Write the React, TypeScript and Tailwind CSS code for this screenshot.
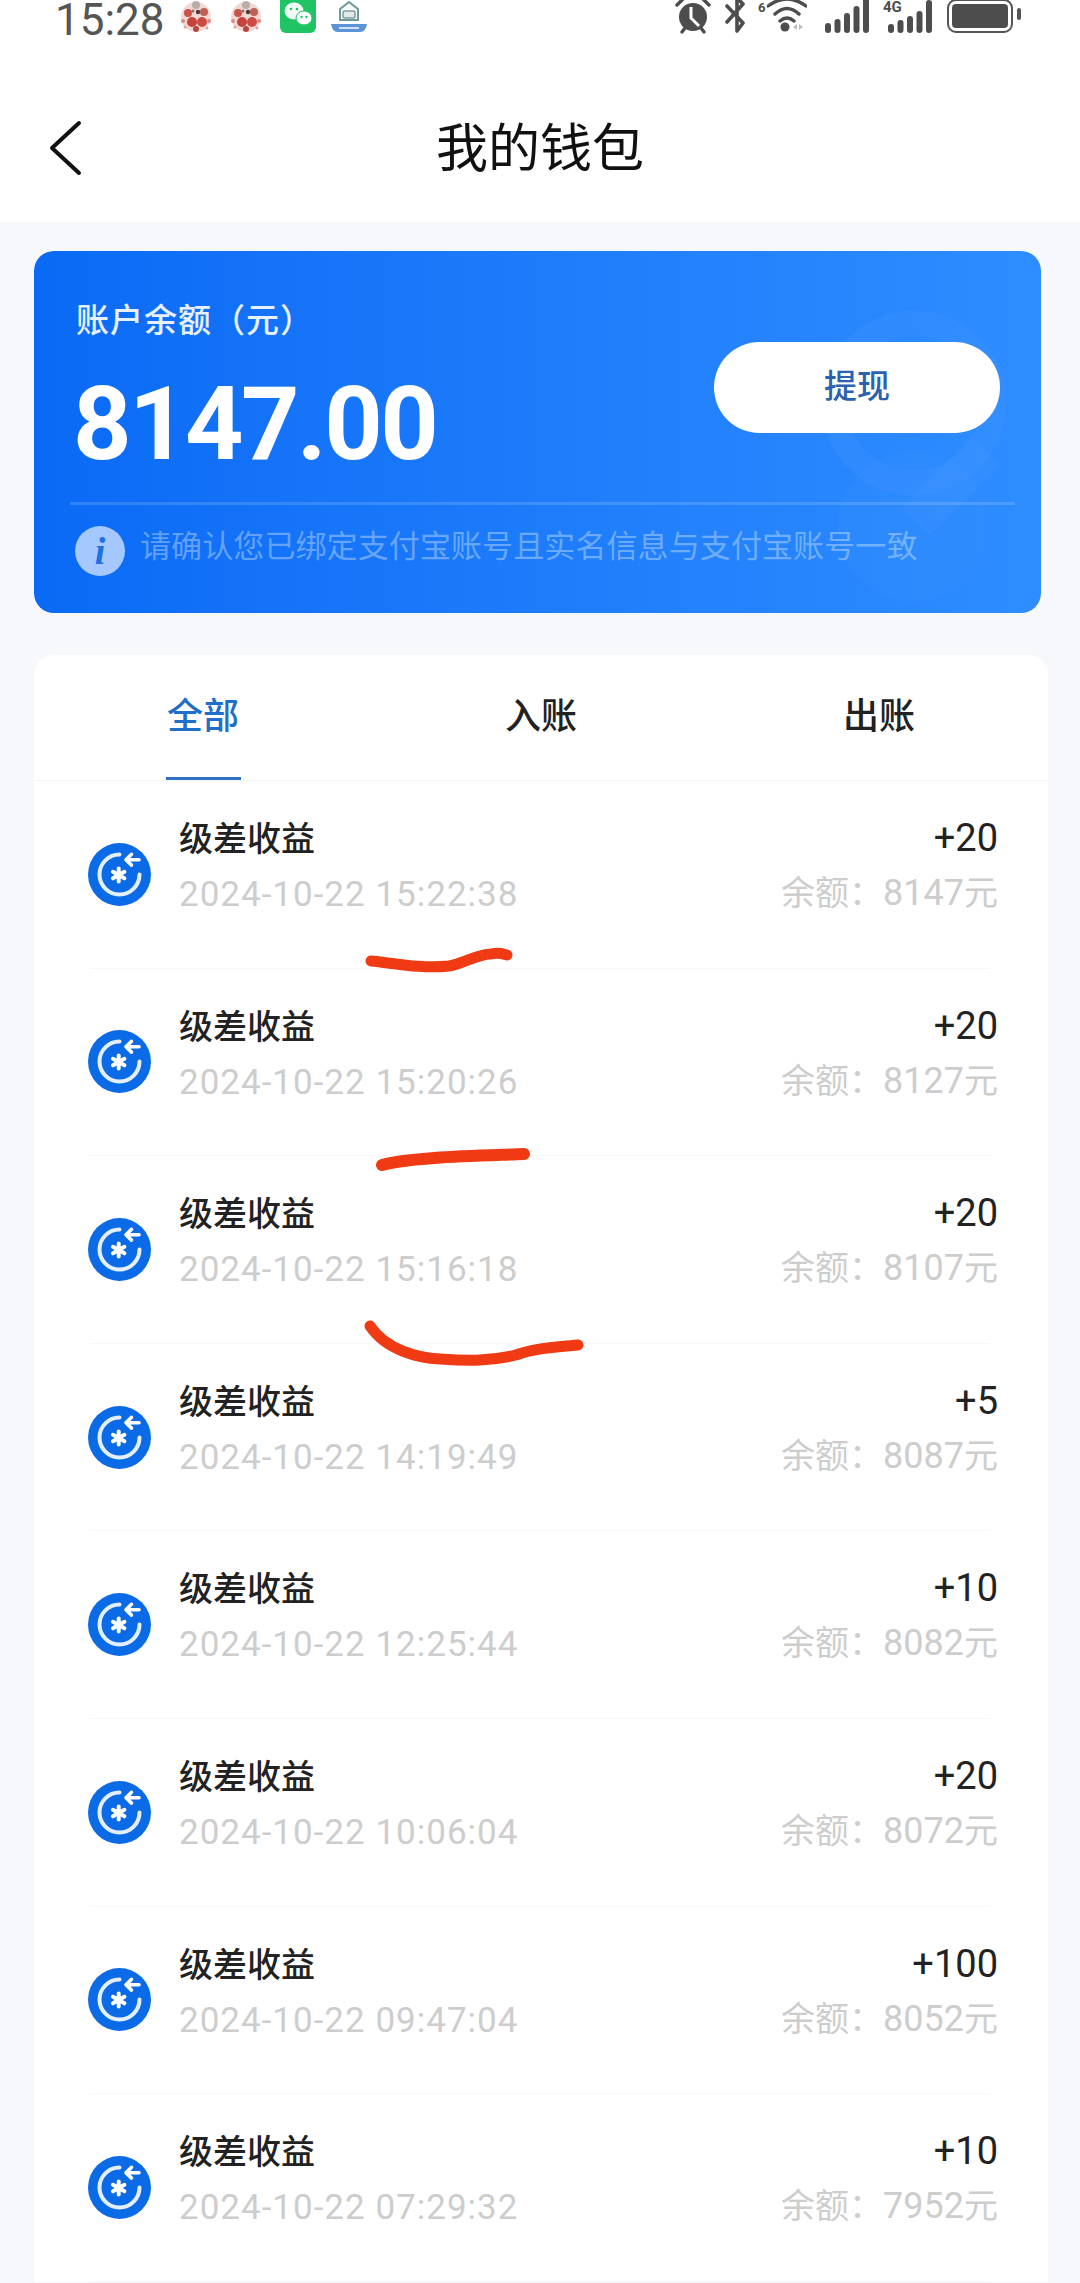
const rows = [
  ["2024-10-22 15:22:38", "+20", "8147"],
  ["2024-10-22 15:20:26", "+20", "8127"],
  ["2024-10-22 15:16:18", "+20", "8107"],
  ["2024-10-22 14:19:49", "+5", "8087"],
  ["2024-10-22 12:25:44", "+10", "8082"],
  ["2024-10-22 10:06:04", "+20", "8072"],
  ["2024-10-22 09:47:04", "+100", "8052"],
  ["2024-10-22 07:29:32", "+10", "7952"],
];

function RowIcon() {
  return (
    <svg width="63" height="63" viewBox="0 0 63 63" className="shrink-0">
      <circle cx="31.5" cy="31.5" r="31.5" fill="#0b6be6" />
      <path d="M31.5 11.5A20 20 0 1 0 51.5 31.5" fill="none" stroke="#e4effd" strokeWidth="4" strokeLinecap="round" />
      <path d="M51 16.7H38M43.5 11.3l-5.5 5.4 5.5 5.4" fill="none" stroke="#fff" strokeWidth="3.6" strokeLinecap="round" strokeLinejoin="round" />
      <path d="M30.7 25.5v13M25 28.8l11.4 6.5M36.4 28.8L25 35.3" fill="none" stroke="#fff" strokeWidth="4" strokeLinecap="round" />
    </svg>
  );
}

function Mascot() {
  return (
    <svg width="36" height="36" viewBox="0 0 36 36">
      <circle cx="18" cy="17" r="15" fill="#f2d8d3" />
      <circle cx="10" cy="13" r="4" fill="#c9524a" />
      <circle cx="26" cy="12" r="4" fill="#bf5f58" />
      <circle cx="14" cy="22" r="5" fill="#c6433c" />
      <circle cx="24" cy="22" r="5" fill="#cd4a42" />
      <circle cx="18" cy="29" r="3" fill="#b9473f" />
      <circle cx="18" cy="5" r="4" fill="#b9aeaa" />
      <circle cx="20" cy="12" r="2.2" fill="#4b3a38" />
      <circle cx="15" cy="11" r="1.5" fill="#8c6f6a" />
      <circle cx="5" cy="21" r="2" fill="#d98c84" />
      <circle cx="31" cy="21" r="2" fill="#d98c84" />
      <circle cx="7" cy="27" r="1.5" fill="#d9a49e" />
      <circle cx="29" cy="28" r="1.5" fill="#d9a49e" />
    </svg>
  );
}

function Bars({ short }: { short?: boolean }) {
  const h = short ? [9, 13, 17, 22, 33] : [10, 14, 20, 27, 36];
  return (
    <svg width="44" height="36" viewBox="0 0 44 36">
      {h.map((v, i) => (
        <rect key={i} x={i * 9.5} y={33 - v} width="6" height={v} rx="3" fill="#4d4d4d" />
      ))}
    </svg>
  );
}

function StatusBar() {
  return (
    <div className="h-[36px] flex items-end justify-between overflow-hidden text-[#555555]">
      <div className="flex items-end ml-[55px]">
        <span className="text-[44px] leading-[36px] font-['Roboto',sans-serif] -mb-[2px]">15:28</span>
        <div className="ml-[13px] flex items-end gap-[14px]">
          <Mascot />
          <Mascot />
        </div>
        <svg width="36" height="36" viewBox="0 0 36 36" className="ml-[16px]">
          <rect x="0" y="-6" width="36" height="39" rx="6" fill="#20c464" />
          <ellipse cx="14" cy="11" rx="9.5" ry="8.5" fill="#f2fbf5" />
          <ellipse cx="24" cy="18" rx="8" ry="7" fill="#fff" stroke="#20c464" strokeWidth="1" />
          <circle cx="11" cy="9" r="1.3" fill="#20c464" />
          <circle cx="17" cy="9" r="1.3" fill="#20c464" />
          <circle cx="21.5" cy="17" r="1.2" fill="#20c464" />
          <circle cx="26.5" cy="17" r="1.2" fill="#20c464" />
        </svg>
        <svg width="36" height="36" viewBox="0 0 36 36" className="ml-[15px]">
          <path d="M9 9L18 2l9 7v11H9z" fill="#f5f9f8" stroke="#6f9a9a" strokeWidth="2" />
          <rect x="12" y="11" width="12" height="7" rx="1" fill="#dfeaea" stroke="#4f6f7f" strokeWidth="1" />
          <path d="M0 24h36c-1 5-3 8-7 8H7c-4 0-6-3-7-8z" fill="#5b93d6" />
          <rect x="8" y="27" width="20" height="2" fill="#cfe0f5" />
        </svg>
      </div>
      <div className="flex items-end mr-[58px]">
        <svg width="40" height="36" viewBox="0 0 40 36">
          <circle cx="20" cy="17" r="14" fill="#4d4d4d" />
          <path d="M18 7v11l8 8" fill="none" stroke="#fff" strokeWidth="3" />
          <path d="M9 32l3-4M31 32l-3-4M4 5l6-6M36 5l-6-6" stroke="#4d4d4d" strokeWidth="3.4" strokeLinecap="round" />
        </svg>
        <svg width="26" height="36" viewBox="0 0 26 36" className="ml-[10px]">
          <path d="M4 6l16 17-6 8V-2l6 6L4 22" fill="none" stroke="#4d4d4d" strokeWidth="3.6" strokeLinejoin="round" strokeLinecap="round" />
        </svg>
        <div className="relative w-[40px] h-[36px] ml-[18px]">
          <span className="absolute left-[-9px] top-0 text-[13px] leading-[15px] font-bold font-['Roboto',sans-serif] text-[#4d4d4d]">6</span>
          <svg width="40" height="36" viewBox="0 0 40 36" className="absolute left-0 top-0">
            <path d="M1 6Q20-8 39 6M8 14Q20 3 32 14M13 21Q20 15 27 21" fill="none" stroke="#4d4d4d" strokeWidth="3.4" strokeLinecap="round" />
            <circle cx="18" cy="27" r="4.5" fill="#4d4d4d" />
            <path d="M26 27l4-3v6zM32 24l4 3-4 3z" fill="#bdbdbd" />
          </svg>
        </div>
        <div className="ml-[18px] flex items-end"><Bars /></div>
        <div className="relative ml-[19px] w-[44px] h-[36px]">
          <Bars short />
          <span className="absolute left-[-5px] top-0 text-[15px] leading-[15px] font-bold font-['Roboto',sans-serif] text-[#4d4d4d]">4G</span>
        </div>
        <svg width="76" height="36" viewBox="0 0 76 36" className="ml-[14px]">
          <rect x="2" y="0" width="64" height="32" rx="8" fill="none" stroke="#555" strokeWidth="2" />
          <rect x="6" y="4" width="56" height="24" rx="4" fill="#4d4d4d" />
          <rect x="71" y="8" width="4" height="12" rx="2" fill="#555" />
        </svg>
      </div>
    </div>
  );
}

export default function App() {
  return (
    <div className="w-[1080px] h-[2283px] overflow-hidden bg-[#f7f8fc] font-['Noto_Sans_CJK_SC','Roboto',sans-serif] relative">
      <div className="bg-white h-[222px]">
        <StatusBar />
        <div className="h-[186px] relative flex items-center justify-center pt-[32px]">
          <svg width="36" height="56" viewBox="0 0 36 56" className="absolute left-[48px] top-[84px]">
            <path d="M31 3L4 28l27 25" fill="none" stroke="#111" strokeWidth="4" strokeLinecap="round" strokeLinejoin="round" />
          </svg>
          <span className="text-[52px] leading-[60px] text-[#111]">我的钱包</span>
        </div>
      </div>

      <div className="ml-[34px] w-[1007px] mt-[29px] h-[362px] rounded-[20px] bg-gradient-to-r from-[#0a6af5] to-[#2e8dff] relative overflow-hidden">
        <svg width="345" height="362" viewBox="0 0 345 362" className="absolute right-0 top-0">
          <circle cx="218" cy="152" r="80" fill="none" stroke="#4a9dff" strokeWidth="25" opacity="0.2" />
          <path d="M290 200l-70 70" fill="none" stroke="#4a9dff" strokeWidth="40" opacity="0.2" />
          <circle cx="217" cy="276" r="75" fill="#4a9dff" opacity="0.1" />
        </svg>
        <div className="relative pl-[42px] pr-[26px]">
          <div className="text-[33px] leading-[40px] text-white/90 pt-[47px] font-medium tracking-[1px]">账户余额（元）</div>
          <div className="flex items-start justify-between">
            <div className="text-[102px] leading-[100px] font-bold text-white font-['Roboto',sans-serif] mt-[36px] -ml-[3px] tracking-[-2.5px]">8147.00</div>
            <div className="w-[286px] h-[91px] rounded-full bg-white flex items-center justify-center text-[33px] font-medium text-[#2a62b0] mt-[4px] mr-[15px] pb-[6px]">提现</div>
          </div>
          <div className="h-[3px] bg-white/15 -ml-[6px] mt-[28px]" />
          <div className="flex items-center mt-[21px] -ml-[1px]">
            <div className="w-[50px] h-[50px] rounded-full bg-[#a5c8ff] flex items-center justify-center text-[38px] italic font-bold font-['Liberation_Serif',serif] text-[#1f6fe8] shrink-0">i</div>
            <span className="ml-[15px] text-[31px] leading-[40px] text-white/35 whitespace-nowrap -mt-[14px] tracking-[0.1px]">请确认您已绑定支付宝账号且实名信息与支付宝账号一致</span>
          </div>
        </div>
      </div>

      <div className="ml-[34px] w-[1014px] mt-[42px] bg-white rounded-t-[20px]">
        <div className="h-[126px] flex border-b border-[#f4f5f8]">
          {["全部", "入账", "出账"].map((t, i) => (
            <div key={t} className="flex-1 relative flex justify-center pt-[37px]">
              <span className={`text-[36px] leading-[42px] font-medium ${i === 0 ? "text-[#1f6fc8]" : "text-[#222]"}`}>{t}</span>
              {i === 0 && <div className="absolute bottom-[0px] left-[132px] w-[75px] h-[3px] bg-[#2f72c4]" />}
            </div>
          ))}
        </div>
        <div className="pl-[54px] pr-[50px]">
          {rows.map(([date, amt, bal]) => (
            <div key={date}>
              <div className="h-[186.6px] flex items-center">
                <RowIcon />
                <div className="flex-1 self-start ml-[28px] pt-[36px] flex justify-between">
                  <div>
                    <div className="text-[34px] leading-[40px] text-[#222] font-medium">级差收益</div>
                    <div className="text-[35px] leading-[40px] mt-[18px] text-[#cdcdcd] font-['Roboto',sans-serif] tracking-[1px] whitespace-nowrap">{date}</div>
                  </div>
                  <div className="text-right">
                    <div className="text-[38px] leading-[40px] text-[#222] font-['Roboto',sans-serif] mt-[1px]">{amt}</div>
                    <div className="text-[34px] leading-[40px] mt-[13px] text-[#cdcdcd] whitespace-nowrap">余额：<span className="font-['Roboto',sans-serif] text-[36px]">{bal}</span>元</div>
                  </div>
                </div>
              </div>
              <div className="h-px bg-[#f7f7f9] ml-[2px] mr-[8px]" />
            </div>
          ))}
        </div>
      </div>

      <svg width="1080" height="2283" viewBox="0 0 1080 2283" className="absolute left-0 top-0 pointer-events-none">
        <path d="M371 961c22 2 50 8 78 5 14-2 28-12 42-12 8-2 12 0 16 1" fill="none" stroke="#f03a14" strokeWidth="11" strokeLinecap="round" />
        <path d="M382 1165c30-8 90-9 142-11" fill="none" stroke="#f03a14" strokeWidth="12" strokeLinecap="round" />
        <path d="M370 1326c16 24 48 32 70 33 30 2 50 2 76-4 20-7 40-8 62-10" fill="none" stroke="#f03a14" strokeWidth="11" strokeLinecap="round" />
      </svg>
    </div>
  );
}
